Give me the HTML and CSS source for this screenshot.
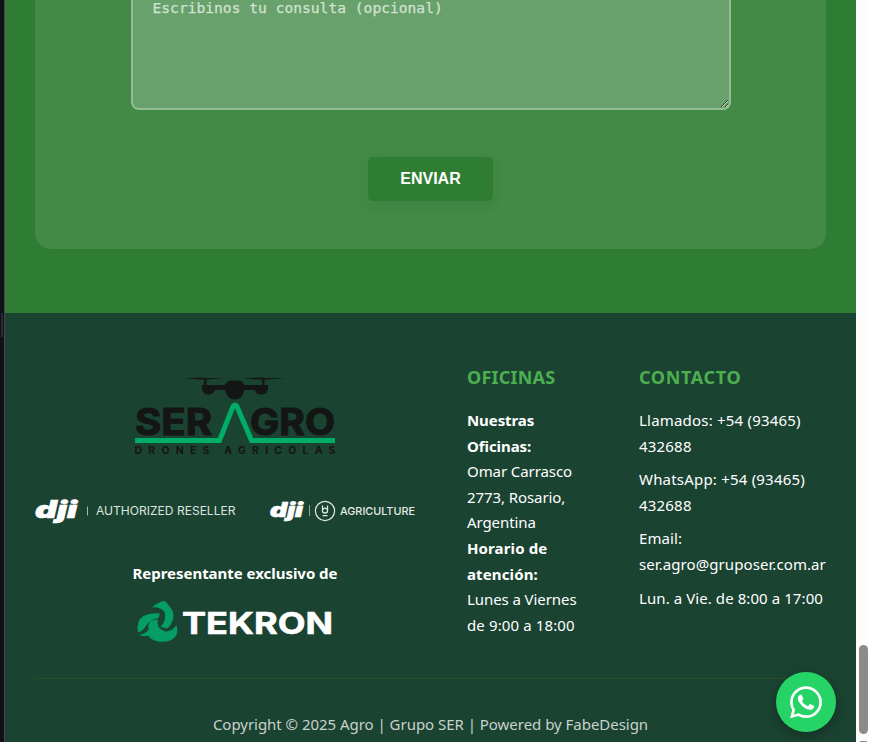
FILE: index.html
```html
<!DOCTYPE html>
<html lang="es">
<head>
<meta charset="utf-8">
<title>Agro | Grupo SER</title>
<link rel="stylesheet" href="styles.css">
</head>
<body>
<aside class="edge"><div class="grip"></div></aside>
<div class="page">
  <main class="contact">
    <form class="card">
      <textarea class="message" placeholder="Escribinos tu consulta (opcional)"></textarea>
      <button class="send" type="button">ENVIAR</button>
    </form>
  </main>
  <footer class="footer">
    <div class="columns">
      <section class="brands">
        <svg class="seragro" viewBox="0 0 202 80" role="img" aria-label="Ser Agro">
          <g fill="#141615">
            <path d="M50 1.200 68 .5 72 1 90 1.300 72 2.400H66ZM109 1.200 128 .5 132 1 152 1.300 132 2.600H124Z"/>
            <path d="M70 1h2.500v7H91Q93 3.500 97 3.500H105Q109 3.500 110 8H128V1h2.500v7H134V12Q133 17.500 127.500 17.500Q122 17.500 121 13H110Q109 22.500 101 22.500Q93 22.500 91 13H81Q79 17.500 74.500 17.500Q69 17.500 68 12V8h2Z"/>
          </g>
          <g class="heavy">
            <text x="1" y="58" textLength="77" lengthAdjust="spacingAndGlyphs">SER</text>
            <text x="116" y="58" textLength="85" lengthAdjust="spacingAndGlyphs">GRO</text>
          </g>
          <path d="M1 63.500H85.500L99 29.500Q101 26.500 103 29.500L117.500 63.500H201" fill="none" stroke="#00ad68" stroke-width="5"/>
          <text class="tagline" x="0.500" y="76.700" textLength="201">DRONES AGRICOLAS</text>
        </svg>
        <div class="dji-row">
          <svg class="reseller" viewBox="0 0 202 30" role="img" aria-label="DJI Authorized Reseller">
            <g class="dji"><text x="0" y="20.500" textLength="42" lengthAdjust="spacingAndGlyphs">dji</text></g>
            <path d="M52.500 9.500v9" stroke="#a9b8b0" stroke-width="1"/>
            <text class="auth" x="61" y="18" textLength="139.500" lengthAdjust="spacingAndGlyphs">AUTHORIZED RESELLER</text>
          </svg>
          <svg class="agriculture" viewBox="0 0 146 30" role="img" aria-label="DJI Agriculture">
            <g class="dji small"><text x="1" y="19.500" textLength="33" lengthAdjust="spacingAndGlyphs">dji</text></g>
            <path d="M40.500 8v11" stroke="#91a69a"/>
            <circle cx="56" cy="14" r="9.600" fill="none" stroke="#e3e9e5" stroke-width="1.200"/>
            <path d="M53.500 8.500v5.500q0 2 2.500 2t2.500-2V8.500M53.500 12.500l2.500-1.500 2.500 1.500M53.500 18.700h5" fill="none" stroke="#e3e9e5" stroke-width="1.300"/>
            <text class="agri" x="71" y="17.500" textLength="75" lengthAdjust="spacingAndGlyphs">AGRICULTURE</text>
          </svg>
        </div>
        <p class="represent">Representante exclusivo de</p>
        <svg class="tekron" viewBox="0 0 198 44" role="img" aria-label="Tekron">
          <g fill="#049d67">
            <path d="M16 7.500Q21 2 29 1Q31 3 34 7Q40 14 35.500 23Q34 27 31 28.500L24.500 27Q31 20 28.500 12Q24 6.500 16 7.500Z"/>
            <path d="M2 32.500Q0 22 6 17Q13 12.500 24 13.500L22.500 18Q14 19 10 26Q7 31 2 32.500Z"/>
            <path d="M3 35Q9 34 12.500 30Q11.500 24 14.500 21Q18 19 22 19.500Q19.500 28 29 31.500Q36 32 40.500 25Q43 34 38 38Q32 43 22 41.500Q15 40 12 35.500Q8 37 3 35Z"/>
          </g>
          <text x="46" y="34.300" textLength="151" lengthAdjust="spacingAndGlyphs">TEKRON</text>
        </svg>
      </section>
      <section class="offices">
        <h3>OFICINAS</h3>
        <p><strong>Nuestras<br>Oficinas:</strong><br>Omar Carrasco<br>2773, Rosario,<br>Argentina<br><strong class="hours">Horario de<br>atención:</strong><br>Lunes a Viernes<br><span class="hours">de 9:00 a 18:00</span></p>
      </section>
      <section class="info">
        <h3>CONTACTO</h3>
        <p class="phone">Llamados: +54 (93465)<br>432688</p>
        <p class="phone">WhatsApp: +54 (93465)<br>432688</p>
        <p>Email:<br>ser.agro@gruposer.com.ar</p>
        <p>Lun. a Vie. de 8:00 a 17:00</p>
      </section>
    </div>
    <p class="copyright">Copyright © 2025 Agro | Grupo SER | Powered by FabeDesign</p>
  </footer>
</div>
<div class="scrollbar"><div class="thumb"></div><div class="stub"></div></div>
<a class="whatsapp" aria-label="WhatsApp">
  <svg viewBox="0 0 448 512" fill="#fff"><path d="M380.900 97.100C339 55.100 283.200 32 223.900 32c-122.400 0-222 99.600-222 222 0 39.100 10.200 77.300 29.600 111L0 480l117.700-30.900c32.400 17.700 68.900 27 106.100 27h.1c122.300 0 224.100-99.600 224.100-222 0-59.300-25.200-115-67.100-157zm-157 341.600c-33.200 0-65.700-8.900-94-25.700l-6.700-4-69.800 18.300L72 359.200l-4.400-7c-18.500-29.400-28.200-63.300-28.200-98.200 0-101.700 82.800-184.500 184.600-184.500 49.300 0 95.600 19.200 130.400 54.100 34.800 34.900 56.200 81.200 56.100 130.500 0 101.800-84.900 184.600-186.600 184.600zm101.200-138.200c-5.500-2.800-32.800-16.200-37.900-18-5.100-1.900-8.800-2.800-12.500 2.800-3.700 5.600-14.300 18-17.600 21.800-3.200 3.700-6.500 4.200-12 1.400-32.600-16.300-54-29.100-75.500-66-5.700-9.800 5.700-9.100 16.300-30.300 1.800-3.700.9-6.900-.5-9.700-1.400-2.800-12.500-30.100-17.100-41.200-4.500-10.800-9.100-9.300-12.500-9.500-3.200-.2-6.900-.2-10.600-.2-3.700 0-9.700 1.400-14.800 6.900-5.100 5.600-19.400 19-19.400 46.300 0 27.300 19.900 53.700 22.600 57.400 2.800 3.700 39.100 59.700 94.800 83.800 35.200 15.200 49 16.500 66.600 13.900 10.700-1.600 32.800-13.400 37.400-26.400 4.600-13 4.600-24.100 3.200-26.400-1.300-2.500-5-3.900-10.500-6.600z"/></svg>
</a>
</body>
</html>
```
FILE: styles.css
```css
* { box-sizing: border-box; }
body {
  margin: 0;
  display: flex;
  height: 742px;
  overflow: hidden;
  color: #fff;
  font: 15px/25.6px "Noto Sans", sans-serif;
}
h3, p { margin: 0; }
.edge {
  width: 5px;
  background: #101116;
  border-right: 1px solid #46464d;
  padding-left: 1px;
  display: flex;
  align-items: center;
}
.grip { width: 2px; height: 24px; margin-top: -92px; background: #292a34; }
.page { width: 851px; display: flex; flex-direction: column; background: #1b4332; }
.contact { height: 313px; padding: 0 30px; background: #2e7d32; }
.card {
  height: 249px;
  display: flex;
  flex-direction: column;
  align-items: center;
  background: #438a46;
  border-radius: 0 0 16px 16px;
}
.message {
  width: 600px;
  height: 110px;
  flex: none;
  border: 2px solid #94bd96;
  border-top: 0;
  border-radius: 0 0 8px 8px;
  background: #68a16b;
  padding: 0 20px;
  font: 14.61px/15px "DejaVu Sans Mono", monospace;
  resize: both;
  overflow: hidden;
}
.message::placeholder { color: #d0e3d1; opacity: 1; -webkit-text-stroke: .25px #d0e3d1; }
.send {
  width: 125px;
  height: 44px;
  margin-top: 47px;
  border: 0;
  border-radius: 5px;
  background: #2e7d32;
  color: #fff;
  font: bold 16px "Liberation Sans", sans-serif;
  box-shadow: 0 4px 15px rgba(0, 0, 0, .06);
}
.footer { padding: 64px 30px 0; }
.columns {
  display: grid;
  grid-template-columns: 380px 120px 188px;
  column-gap: 52px;
  height: 302px;
  border-bottom: 1px solid #2d501b;
  white-space: nowrap;
}
.brands { display: flex; flex-direction: column; align-items: center; }
.seragro { width: 202px; height: 80px; margin-left: 20px; }
.heavy { font: 700 36.500px Inter, sans-serif; fill: #141615; stroke: #141615; stroke-width: 1.200; stroke-linejoin: round; }
.tagline { font: 700 10.500px Inter, sans-serif; fill: #141615; }
.dji-row { display: flex; justify-content: space-between; width: 380px; margin-top: 40px; }
.reseller { width: 202px; height: 30px; overflow: visible; }
.agriculture { width: 146px; height: 30px; overflow: visible; }
.dji { font: italic 900 24px Inter, sans-serif; fill: #fff; stroke: #fff; stroke-width: .7; }
.dji.small { font-size: 20px; }
.auth { font: 11.500px Inter, sans-serif; fill: #dce4df; }
.agri { font: 500 11px Inter, sans-serif; fill: #e5ebe7; }
.represent { margin: 34px 0 13px; margin-left: 20px; font-size: 15px; font-weight: 700; letter-spacing: -.03px; }
.tekron { width: 198px; height: 44px; margin-left: 20px; }
.tekron text { font: 700 30px Inter, sans-serif; fill: #fff; stroke: #fff; stroke-width: .6; }
h3 { color: #4caf50; font-size: 18px; line-height: 26px; margin: -13px 0 18px; font-weight: 700; letter-spacing: .2px; }
.info h3 { letter-spacing: .65px; }
.offices p { letter-spacing: -.08px; }
.offices .hours { letter-spacing: .12px; }
.info p { margin-bottom: 8px; letter-spacing: .08px; }
.info .phone { letter-spacing: .2px; }
.copyright { margin-top: 33px; text-align: center; color: #c8d2cc; letter-spacing: -.03px; }
.scrollbar { width: 13px; background: #fcfcfc; display: flex; flex-direction: column; justify-content: flex-end; align-items: flex-end; padding-right: 1px; }
.thumb { width: 9px; height: 89px; border-radius: 5px; background: #8b8b8b; }
.stub { width: 7px; height: 1px; margin: 7px 1px 0 0; background: #8b8b8b; }
.whatsapp {
  position: fixed;
  right: 33px;
  bottom: 10px;
  width: 60px;
  height: 60px;
  border-radius: 50%;
  background: #25d366;
  display: flex;
  align-items: center;
  justify-content: center;
  box-shadow: 0 4px 12px rgba(0, 0, 0, .3);
}
.whatsapp svg { width: 32px; height: 36.570px; }
```
